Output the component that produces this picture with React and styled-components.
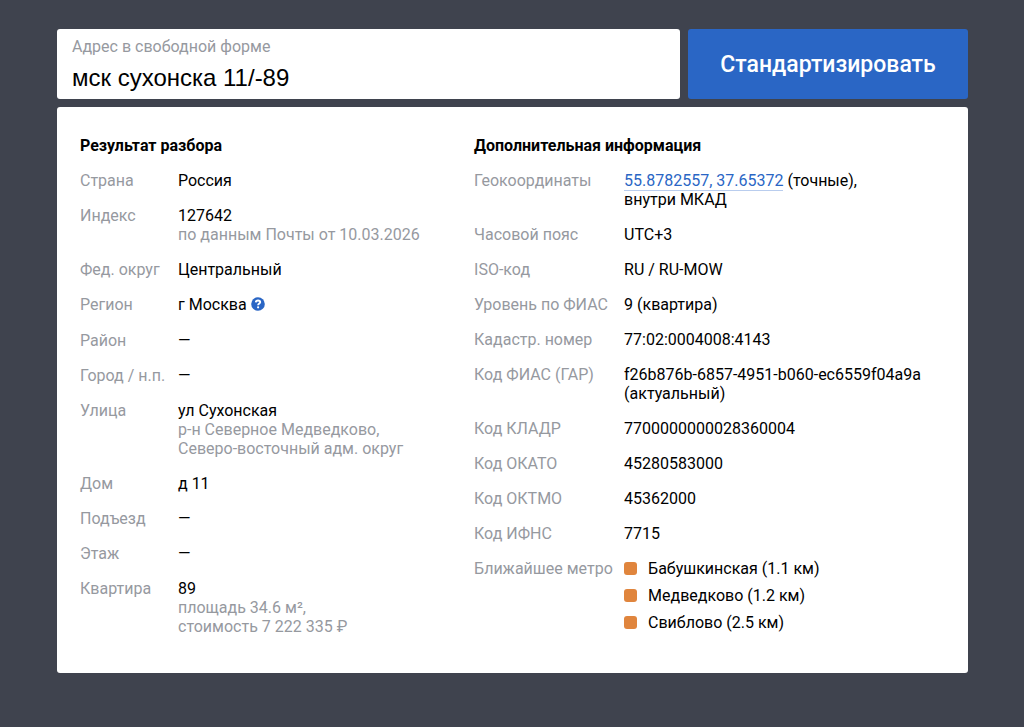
import React, { useState } from "react";
import styled, { createGlobalStyle } from "styled-components";

const GlobalStyle = createGlobalStyle`
  * {
    box-sizing: border-box;
  }
  body {
    margin: 0;
    background: #3f434e;
    color: #000;
    font-family: Roboto, "Liberation Sans", sans-serif;
    font-size: 16px;
    line-height: 19px;
  }
`;

const Page = styled.main`
  display: flex;
  flex-direction: column;
  gap: 8px;
  padding: 29px 56px 54px 57px;
`;

const SearchForm = styled.form`
  display: flex;
  gap: 8px;
`;

const Field = styled.label`
  display: flex;
  flex-direction: column;
  flex: 1;
  gap: 7px;
  min-width: 0;
  padding: 8px 15px 7px;
  border-radius: 3px;
  background: #fff;
  color: #96999f;
`;

const AddressInput = styled.input`
  width: 100%;
  padding: 0;
  border: 0;
  outline: 0;
  background: transparent;
  color: #000;
  font-family: "Liberation Sans", Arial, sans-serif;
  font-size: 24px;
  line-height: 29px;
`;

const SubmitButton = styled.button`
  flex: 0 0 280px;
  border: 0;
  border-radius: 3px;
  background: #2a66c5;
  color: #fff;
  font-family: inherit;
  font-size: 23px;
  font-weight: 500;
  cursor: pointer;
`;

const Results = styled.div`
  display: grid;
  grid-template-columns: 41fr 49fr;
  padding: 29px 23px 37px;
  border-radius: 3px;
  background: #fff;
`;

const Title = styled.h2`
  margin: 0 0 16px;
  font-size: 16px;
  font-weight: 700;
  line-height: 19px;
`;

const List = styled.dl`
  display: grid;
  grid-template-columns: ${(props) => props.$labelWidth} 1fr;
  row-gap: 16px;
  margin: 0;
`;

const Name = styled.dt`
  color: #96999f;
`;

const Value = styled.dd`
  margin: 0;
`;

const Note = styled.div`
  color: #96999f;
  white-space: pre-line;
`;

const MapLink = styled.a`
  border-bottom: 1px solid #b9cdee;
  color: #2a66c5;
  text-decoration: none;
`;

const HintButton = styled.button`
  display: inline-flex;
  padding: 0 0 4px;
  border: 0;
  background: none;
  vertical-align: -1px;
  cursor: help;
`;

const Stations = styled.ul`
  display: flex;
  flex-direction: column;
  gap: 8px;
  margin: 0;
  padding: 0;
  list-style: none;
`;

const Station = styled.li`
  display: flex;
  align-items: center;
  gap: 11px;

  &::before {
    content: "";
    width: 13px;
    height: 13px;
    border-radius: 3px;
    background: #e0853d;
  }
`;

const HintIcon = () => (
  <svg width="14" height="14" viewBox="0 0 14 14" aria-hidden="true">
    <circle cx="7" cy="7" r="6.8" fill="#2a66c5" />
    <path
      d="M4.8 5.4C4.9 4.1 5.8 3.5 7 3.5C8.3 3.5 9.2 4.2 9.2 5.2C9.2 6.5 7.1 6.6 7.1 8.3"
      fill="none"
      stroke="#fff"
      strokeWidth="1.9"
    />
    <circle cx="7.1" cy="10.3" r="1.1" fill="#fff" />
  </svg>
);

const parsed = [
  { name: "Страна", value: "Россия" },
  { name: "Индекс", value: "127642", note: "по данным Почты от 10.03.2026" },
  { name: "Фед. округ", value: "Центральный" },
  {
    name: "Регион",
    value: (
      <>
        г Москва{" "}
        <HintButton type="button" aria-label="?">
          <HintIcon />
        </HintButton>
      </>
    ),
  },
  { name: "Район", value: "—" },
  { name: "Город / н.п.", value: "—" },
  {
    name: "Улица",
    value: "ул Сухонская",
    note: "р-н Северное Медведково,\nСеверо-восточный адм. округ",
  },
  { name: "Дом", value: "д 11" },
  { name: "Подъезд", value: "—" },
  { name: "Этаж", value: "—" },
  {
    name: "Квартира",
    value: "89",
    note: "площадь 34.6 м²,\nстоимость 7 222 335 ₽",
  },
];

const stations = [
  "Бабушкинская (1.1 км)",
  "Медведково (1.2 км)",
  "Свиблово (2.5 км)",
];

const additional = [
  {
    name: "Геокоординаты",
    value: (
      <>
        <MapLink href="#map">55.8782557, 37.65372</MapLink> (точные),
        <br />
        внутри МКАД
      </>
    ),
  },
  { name: "Часовой пояс", value: "UTC+3" },
  { name: "ISO-код", value: "RU / RU-MOW" },
  { name: "Уровень по ФИАС", value: "9 (квартира)" },
  { name: "Кадастр. номер", value: "77:02:0004008:4143" },
  {
    name: "Код ФИАС (ГАР)",
    value: (
      <>
        f26b876b-6857-4951-b060-ec6559f04a9a
        <br />
        (актуальный)
      </>
    ),
  },
  { name: "Код КЛАДР", value: "7700000000028360004" },
  { name: "Код ОКАТО", value: "45280583000" },
  { name: "Код ОКТМО", value: "45362000" },
  { name: "Код ИФНС", value: "7715" },
  {
    name: "Ближайшее метро",
    value: (
      <Stations>
        {stations.map((s) => (
          <Station key={s}>{s}</Station>
        ))}
      </Stations>
    ),
  },
];

const Details = ({ title, rows, labelWidth }) => (
  <section>
    <Title>{title}</Title>
    <List $labelWidth={labelWidth}>
      {rows.map((row) => (
        <React.Fragment key={row.name}>
          <Name>{row.name}</Name>
          <Value>
            {row.value}
            {row.note && <Note>{row.note}</Note>}
          </Value>
        </React.Fragment>
      ))}
    </List>
  </section>
);

export default function App() {
  const [address, setAddress] = useState("мск сухонска 11/-89");

  return (
    <>
      <GlobalStyle />
      <Page>
        <SearchForm onSubmit={(e) => e.preventDefault()}>
          <Field htmlFor="address">
            Адрес в свободной форме
            <AddressInput
              id="address"
              type="text"
              value={address}
              onChange={(e) => setAddress(e.target.value)}
            />
          </Field>
          <SubmitButton type="submit">Стандартизировать</SubmitButton>
        </SearchForm>
        <Results>
          <Details title="Результат разбора" rows={parsed} labelWidth="98px" />
          <Details
            title="Дополнительная информация"
            rows={additional}
            labelWidth="150px"
          />
        </Results>
      </Page>
    </>
  );
}
